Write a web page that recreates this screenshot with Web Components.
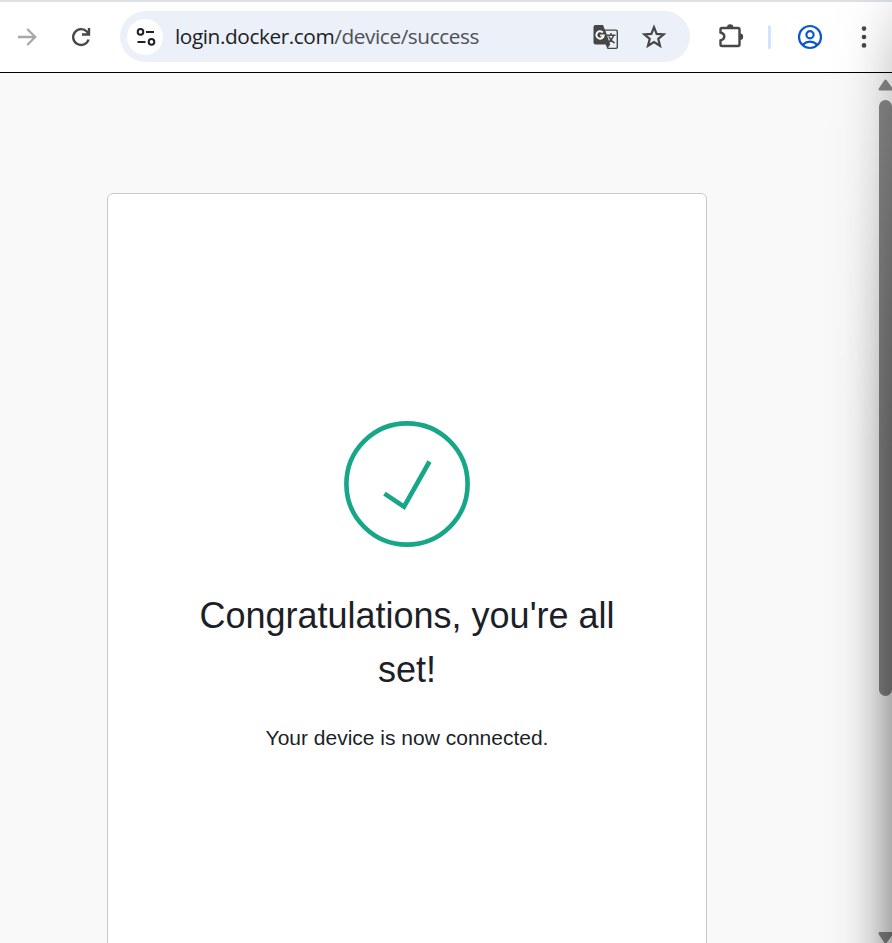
<!DOCTYPE html>
<html lang="en">
<head>
<meta charset="utf-8">
<title>Docker</title>
<style>
html,body{margin:0;height:943px;overflow:hidden}
body{font-family:"Liberation Sans",Arial,sans-serif;background:#f9f9f9}
</style>
</head>
<body>
<browser-window>
  <browser-toolbar slot="toolbar">
    <address-bar host="login.docker.com" path="/device/success"></address-bar>
  </browser-toolbar>
  <status-card>
    <check-badge slot="icon"></check-badge>
    <span slot="title">Congratulations, you're all set!</span>
    <span slot="message">Your device is now connected.</span>
  </status-card>
  <scroll-bar slot="scroll"></scroll-bar>
</browser-window>
<script>
const define = (name, html) => customElements.define(name, class extends HTMLElement {
  constructor() {
    super();
    this.attachShadow({mode: 'open'}).innerHTML = html;
  }
  connectedCallback() {
    for (const el of this.shadowRoot.querySelectorAll('[data-attr]'))
      el.textContent = this.getAttribute(el.dataset.attr);
  }
});

define('check-badge', `
<style>:host{display:block;width:126px;height:126px}svg{display:block}</style>
<svg width="126" height="126" fill="none" stroke="#17a788" stroke-width="4.600">
<circle cx="63" cy="63" r="60.600"/><path d="M40.500 72.600L60 85.600L85.500 40.500"/></svg>`);

define('status-card', `
<style>
:host{display:flex;flex-direction:column;align-items:center;box-sizing:border-box;width:600px;height:900px;
margin:120px 0 0 107px;padding:227px 80px 0;background:#fff;border:1px solid #c8c9ca;border-radius:6px;color:#1c1f28;text-align:center;flex:none}
h1{margin:42px 0 0;font-weight:400;font-size:36px;line-height:54px}
p{margin:26px 0 0;font-size:21px;line-height:30px;white-space:nowrap}
</style>
<slot name="icon"></slot><h1><slot name="title"></slot></h1><p><slot name="message"></slot></p>`);

define('address-bar', `
<style>
:host{display:flex;align-items:center;box-sizing:border-box;width:570px;height:51px;border-radius:26px;background:#ebf0f9;padding:0 24px 0 7px;margin-bottom:1px;flex:none}
.site{width:36px;height:36px;border-radius:50%;background:#fff;flex:none}
.url{margin:0 0 2px 12px;flex:1;font:20.8px/30px "Open Sans","Noto Sans",sans-serif;white-space:nowrap;color:#202124;letter-spacing:-.42px}
.path{color:#4d5156}
svg{display:block;flex:none}
.star{margin-left:22px;margin-right:-1px}
</style>
<span class="site"><svg width="36" height="36" fill="none" stroke="#202124" stroke-width="2"><circle cx="13.500" cy="12.900" r="2.800"/><path d="M19 13h8M10.500 23h8"/><circle cx="24.500" cy="22.900" r="2.800"/></svg></span>
<span class="url"><span data-attr="host"></span><span class="path" data-attr="path"></span></span>
<svg width="26" height="26" viewBox="0 0 26 26"><path d="M2.500 1H10l1.800 4.500H23A2 2 0 0 1 25 7.500V23a2 2 0 0 1-2 2H14.500L12.600 20.500H2.500A2 2 0 0 1 .5 18.500V3A2 2 0 0 1 2.500 1Z" fill="#474747"/><path d="M12.400 6.800H22.600a1 1 0 0 1 1 1V22.700a1 1 0 0 1-1 1H15l2.200-3.200Z" fill="#ebf0f9"/><path d="M13.500 11.200h9M18 9v2M20.800 11c-.8 3-2.600 5.200-5.300 7.500M15.800 12.500c1 2.500 3 4.800 5.700 6.500" fill="none" stroke="#474747" stroke-width="1.500"/><path d="M9.800 8.500A3.700 3.700 0 1 0 10.700 11.500H7.300" fill="none" stroke="#fff" stroke-width="1.900"/></svg>
<svg class="star" width="26" height="26" viewBox="0 0 26 26"><path d="M13 3.200l2.650 6.650 7 .5-5.400 4.500 1.750 6.900L13 18l-6 3.750 1.750-6.900-5.400-4.500 7-.5Z" fill="none" stroke="#474747" stroke-width="2.200"/></svg>`);

define('browser-toolbar', `
<style>
:host{display:flex;align-items:center;box-sizing:border-box;height:73px;padding:0 15px 0 14px;background:#fff;border-top:2px solid #dee1e6;border-bottom:1px solid #000;flex:none}
svg{display:block;flex:none}
.reload{margin:0 26px 0 28px}
.ext{margin:0 0 2px 28px}
.sep{width:3px;height:24px;border-radius:2px;background:#d3e3fd;margin:0 26px 0 22px}
.menu{margin-left:38px}
</style>
<svg width="26" height="26" fill="none" stroke="#a8a8a8" stroke-width="2.300"><path d="M4 13H21M13.200 5l8 8-8 8"/></svg>
<svg class="reload" width="26" height="26" fill="none" stroke="#474747" stroke-width="2.400"><path d="M20.600 15.500A7.900 7.900 0 1 1 19 7.800L21 10M21 4v6.500H14"/></svg>
<slot></slot>
<svg class="ext" width="28" height="28" viewBox="0 0 28 28"><path d="M4 6H20a1.500 1.500 0 0 1 1.500 1.500V22.500A1.500 1.500 0 0 1 20 24H4A1.500 1.500 0 0 1 2.500 22.500V18.500Q6.300 17.500 6.300 14.500T2.500 10.500V7.500A1.500 1.500 0 0 1 4 6Z" fill="none" stroke="#474747" stroke-width="2.400"/><path d="M9 5.500a3.200 3.200 0 0 1 6.400 0ZM22 11.500a3.200 3.200 0 0 1 0 6.400Z" fill="#474747"/></svg>
<span class="sep"></span>
<svg width="26" height="26" fill="none" stroke="#0b57d0" stroke-width="2.200"><circle cx="13" cy="13" r="11"/><circle cx="13" cy="10.700" r="3.600"/><path d="M5.500 20.800Q13 14.500 20.500 20.800"/></svg>
<svg class="menu" width="6" height="26" fill="#474747"><circle cx="3" cy="4.600" r="2.300"/><circle cx="3" cy="13" r="2.300"/><circle cx="3" cy="21.400" r="2.300"/></svg>`);

define('scroll-bar', `
<style>
:host{display:flex;flex-direction:column;width:15px;height:870px}
svg{display:block;flex:none}
.up{margin-top:6px}
.thumb{width:13px;height:596px;border-radius:6.500px;background:#888;margin:9px 0 0 2px}
.down{margin-top:auto}
</style>
<svg class="up" width="15" height="12" fill="#888"><path d="M7.500 1Q8.500 0 9.500 1L15 8.500V11.500H2.500Q.8 11 1.800 9.500Z"/></svg>
<div class="thumb"></div>
<svg class="down" width="15" height="11" fill="#888"><path d="M2.500 0H15V3.500L9.500 11H7.500L1.500 2Q1 .4 2.500 0Z"/></svg>`);

define('browser-window', `
<style>
:host{display:flex;flex-direction:column;width:892px;height:943px;position:relative;overflow:hidden;background:#f9f9f9}
main{display:flex;justify-content:space-between;flex:1;min-height:0;overflow:hidden}
.shade{position:absolute;top:0;right:0;width:70px;height:943px;pointer-events:none;
background:linear-gradient(90deg,#0000 0,rgba(0,0,0,.015) 30%,rgba(0,0,0,.055) 50%,rgba(0,0,0,.14) 72%,rgba(0,0,0,.31) 100%);
-webkit-mask:linear-gradient(#0002 0,#0006 60px,#0008 150px,#000c 300px,#000 450px);mask:linear-gradient(#0002 0,#0006 60px,#0008 150px,#000c 300px,#000 450px)}
</style>
<slot name="toolbar"></slot>
<main><slot></slot><slot name="scroll"></slot></main>
<div class="shade"></div>`);
</script>
</body>
</html>
